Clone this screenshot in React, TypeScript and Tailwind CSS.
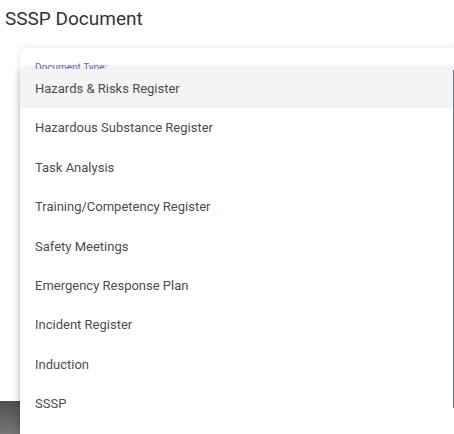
const options = [
  "Hazards & Risks Register",
  "Hazardous Substance Register",
  "Task Analysis",
  "Training/Competency Register",
  "Safety Meetings",
  "Emergency Response Plan",
  "Incident Register",
  "Induction",
  "SSSP",
];

export default function App() {
  return (
    <div className="relative h-[434px] w-[454px] overflow-hidden bg-white font-['Roboto',sans-serif]">
      {/* Page header */}
      <h1 className="h-[48px] pl-[5px] pt-[6px] text-[19px] leading-[25px] font-normal text-[#333]">SSSP Document</h1>

      {/* Form area behind the open select */}
      <div className="flex h-[386px]">
        <div className="flex w-[20px] flex-col justify-end">
          <div className="h-[33px] w-[20px] bg-gradient-to-b from-[#4f4f4f] to-[#777]" />
        </div>
        <div className="flex-1 rounded-tl-lg bg-white pl-[15px] pt-[14px] shadow-[0_0_6px_rgba(0,0,0,0.12)]">
          <label className="block text-[10px] leading-[12px] text-[#5c6bc0]">Document Type:</label>
        </div>
      </div>

      {/* Open dropdown menu */}
      <ul className="absolute left-[20px] top-[69px] w-[450px] bg-white pb-[20px] shadow-[0_2px_8px_rgba(0,0,0,0.22)]">
        {options.map((o, i) => (
          <li
            key={o}
            className={`flex h-[39.4px] items-center pl-[15px] text-[13px] text-[#4d4d4d] ${i === 0 ? "bg-[#f4f4f4]" : ""}`}
          >
            {o}
          </li>
        ))}
      </ul>

      {/* Scrollbar thumb */}
      <div className="absolute right-0 top-[70px] h-[338px] w-[1.5px] bg-[#6b7280]" />
    </div>
  );
}
